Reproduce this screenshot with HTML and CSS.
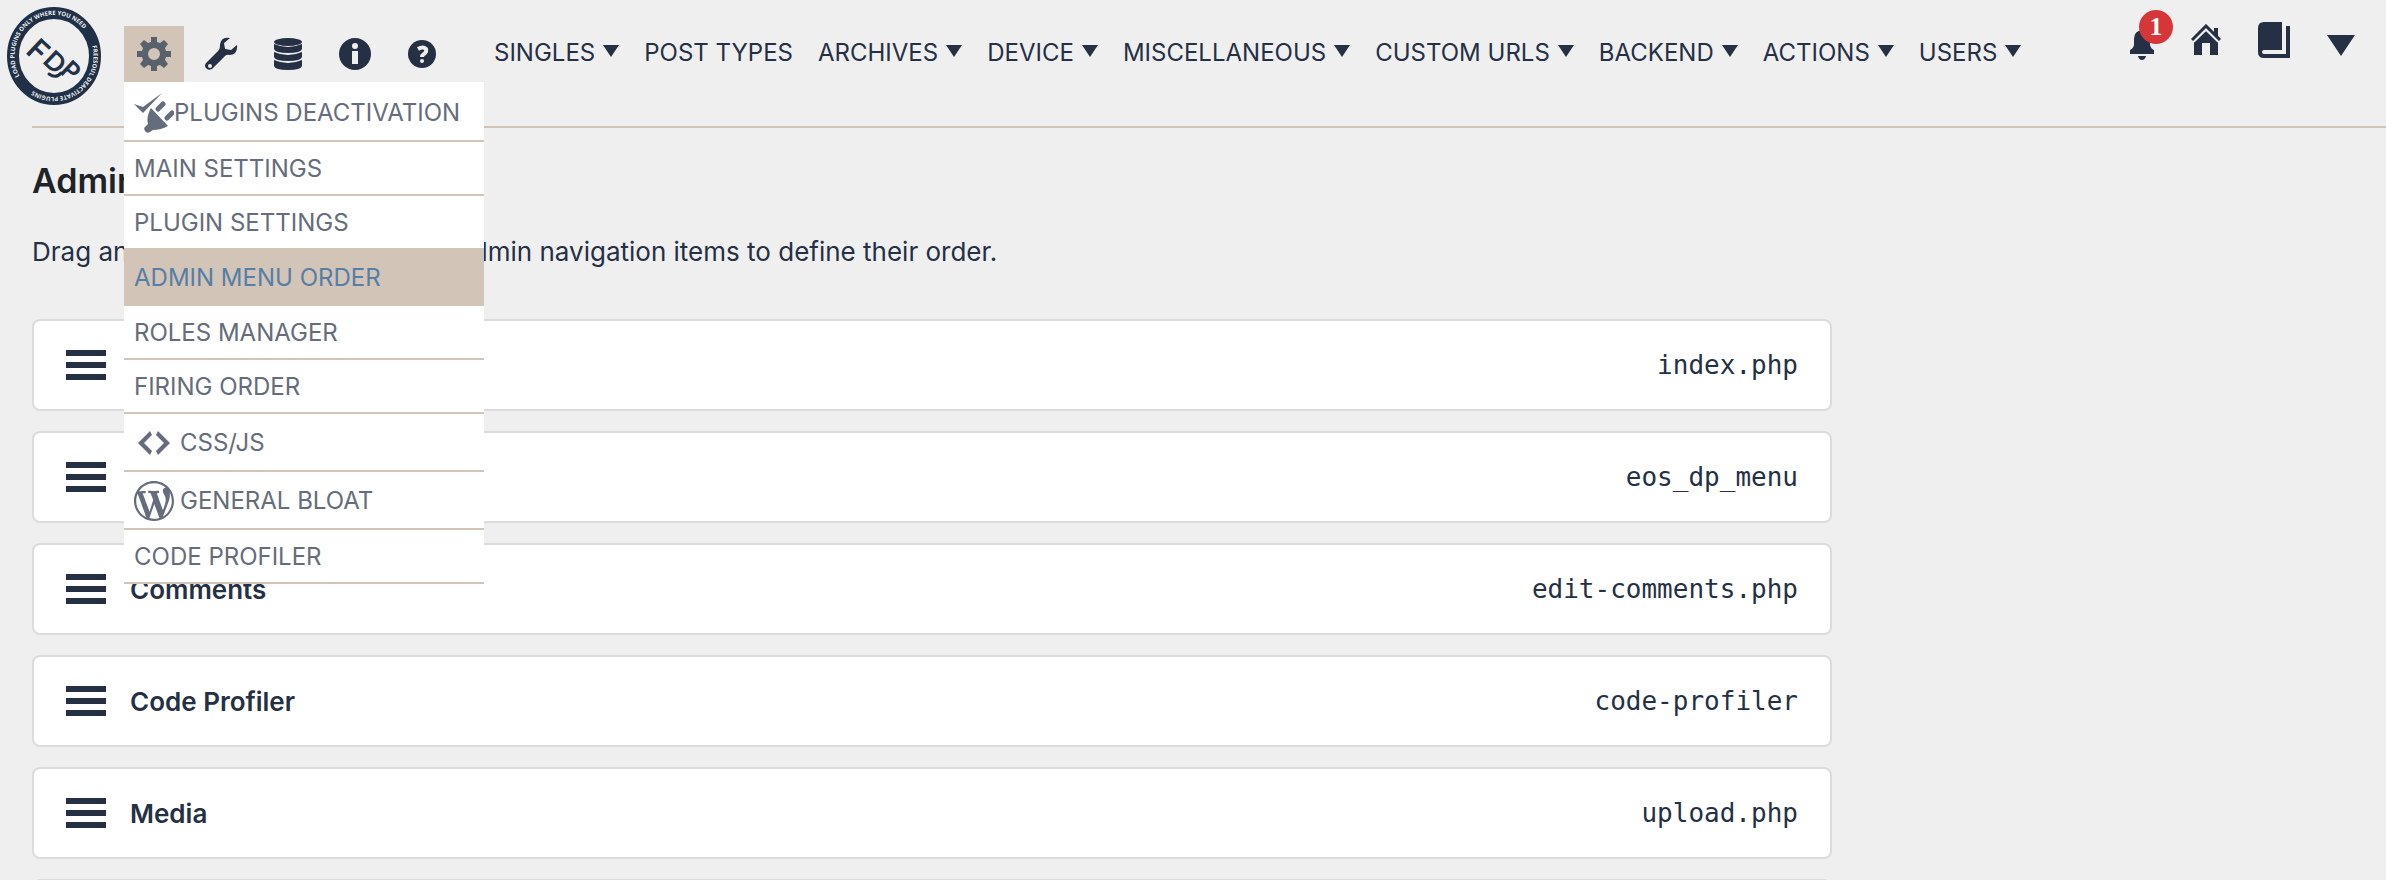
FILE: index.html
```
<!DOCTYPE html>
<html lang="en">
<head>
  <meta charset="UTF-8">
  <meta name="viewport" content="width=device-width, initial-scale=1.0">
  <title>Admin Menu Order</title>
  <link rel="stylesheet" href="styles.css">
</head>
<body>

  <!-- Header -->
  <header class="fdp-header">
    <a href="#" class="logo" aria-label="Freesoul Deactivate Plugins">
      <svg width="96" height="100" viewBox="0 0 96 100">
        <defs>
          <path id="ring" d="M15.6 73.5 A39.5 41 0 0 1 80.4 26.5 A39.5 41 0 0 1 15.6 73.5" />
        </defs>
        <ellipse cx="48" cy="50" rx="41" ry="43" fill="none" stroke="#1f3047" stroke-width="12" />
        <text class="ring-text"><textPath href="#ring" startOffset="4">LOAD PLUGINS ONLY WHERE YOU NEED</textPath></text>
        <text class="ring-text"><textPath href="#ring" startOffset="141">FREESOUL DEACTIVATE PLUGINS</textPath></text>
        <g class="monogram">
          <text transform="translate(19 46) rotate(43)" class="tall">F</text>
          <text transform="translate(36 56) rotate(43)">D</text>
          <text transform="translate(53 66) rotate(43)">P</text>
          <path d="M43 68 Q50 73 55 67" fill="none" stroke="#1f3047" stroke-width="3" stroke-linecap="round" />
        </g>
      </svg>
    </a>

    <nav class="icon-nav">
      <div class="icon-item active">
        <a href="#" aria-label="Settings">
          <svg width="34" height="34" viewBox="0 0 34 34">
            <path fill-rule="evenodd" d="M14 0h6v5l3 1 4-3 4 4-3 4 1 3h5v6h-5l-1 3 3 4-4 4-4-3-3 1v5h-6v-5l-3-1-4 3-4-4 3-4-1-3H0v-6h5l1-3-3-4 4-4 4 3 3-1zM17 11a6 6 0 1 0 0 12a6 6 0 0 0 0-12z" />
          </svg>
        </a>
        <ul class="dropdown">
          <li>
            <a href="#">
              <svg width="40" height="40" viewBox="0 0 40 40">
                <path d="M0 11l9 3L28 0 9 20z" />
                <path d="M17 15l17 18q-7 4-15 4l-3 2q-3 2-5-1t1-5l2-2q-2-7 3-16z" />
                <path d="M24 16l5-5M33 25l5-5" fill="none" stroke="#656c7b" stroke-width="5" stroke-linecap="round" />
              </svg>PLUGINS DEACTIVATION
            </a>
          </li>
          <li><a href="#">MAIN SETTINGS</a></li>
          <li><a href="#">PLUGIN SETTINGS</a></li>
          <li><a href="#" class="current">ADMIN MENU ORDER</a></li>
          <li><a href="#">ROLES MANAGER</a></li>
          <li><a href="#">FIRING ORDER</a></li>
          <li>
            <a href="#" class="with-icon">
              <svg width="40" height="40" viewBox="0 0 20 20">
                <path d="M9 6l-4 4 4 4-1 2-6-6 6-6zM11 14l4-4-4-4 1-2 6 6-6 6z" />
              </svg>CSS/JS
            </a>
          </li>
          <li>
            <a href="#" class="with-icon">
              <svg width="40" height="40" viewBox="0 0 20 20">
                <path d="M20 10c0-5.51-4.49-10-10-10C4.48 0 0 4.49 0 10c0 5.52 4.48 10 10 10 5.51 0 10-4.48 10-10zM7.78 15.37L4.37 6.22c.55-.02 1.17-.08 1.17-.08.5-.06.44-1.13-.06-1.11 0 0-1.45.11-2.37.11-.18 0-.37 0-.58-.01C4.12 2.69 6.87 1.11 10 1.11c2.33 0 4.45.87 6.05 2.34-.68-.11-1.65.39-1.65 1.58 0 .74.45 1.36.9 2.1.35.61.55 1.36.55 2.46 0 1.49-1.4 5-1.4 5l-3.03-8.37c.54-.02.82-.17.82-.17.5-.05.44-1.25-.06-1.22 0 0-1.44.12-2.38.12-.87 0-2.33-.12-2.33-.12-.5-.03-.56 1.2-.06 1.22l.92.08 1.26 3.41zM17.41 10c.24-.64.74-1.87.43-4.25.7 1.29 1.05 2.71 1.05 4.25 0 3.29-1.73 6.24-4.4 7.78.97-2.59 1.94-5.2 2.92-7.78zM6.1 18.09C3.12 16.65 1.11 13.53 1.11 10c0-1.3.23-2.48.72-3.59C3.25 10.3 4.67 14.2 6.1 18.09zm4.03-6.63l2.58 6.98c-.86.29-1.76.45-2.71.45-.79 0-1.57-.11-2.29-.33.81-2.38 1.62-4.74 2.42-7.1z" />
              </svg>GENERAL BLOAT
            </a>
          </li>
          <li><a href="#">CODE PROFILER</a></li>
        </ul>
      </div>
      <div class="icon-item">
        <a href="#" aria-label="Tools">
          <svg width="34" height="34" viewBox="0 0 34 34">
            <path fill-rule="evenodd" d="M26 1q-9-2-10 7 0 3-1 5L2 26q-2 3 0 5 2 3 6 1l13-13q2-2 5-1 8-1 7-10l-6 5-6-1-1-6zM6 27a2 2 0 1 1 0 4a2 2 0 0 1 0-4z" />
          </svg>
        </a>
      </div>
      <div class="icon-item">
        <a href="#" aria-label="Database">
          <svg width="30" height="34" viewBox="0 0 30 34">
            <ellipse cx="15" cy="5" rx="14" ry="4" />
            <path d="M1 7q14 6 28 0v5q-1 4-14 4T1 12zM1 15q14 6 28 0v5q-1 4-14 4T1 20zM1 23q14 6 28 0v6q-1 4-14 4T1 29z" />
          </svg>
        </a>
      </div>
      <div class="icon-item">
        <a href="#" aria-label="Information">
          <svg width="34" height="34" viewBox="0 0 34 34">
            <circle cx="17" cy="17" r="16" />
            <circle cx="17" cy="9" r="3" fill="#efefef" />
            <path d="M14 14h6v13h-6z" fill="#efefef" />
          </svg>
        </a>
      </div>
      <div class="icon-item">
        <a href="#" aria-label="Help">
          <svg width="34" height="34" viewBox="0 0 34 34">
            <circle cx="17" cy="17" r="14" />
            <path d="M13 12q5-3 8 0 1 3-2 5-2 1-2 3" fill="none" stroke="#efefef" stroke-width="4" />
            <circle cx="17" cy="24" r="2" fill="#efefef" />
          </svg>
        </a>
      </div>
    </nav>

    <nav class="main-nav">
      <a href="#" class="has-sub">SINGLES</a>
      <a href="#">POST TYPES</a>
      <a href="#" class="has-sub">ARCHIVES</a>
      <a href="#" class="has-sub">DEVICE</a>
      <a href="#" class="has-sub">MISCELLANEOUS</a>
      <a href="#" class="has-sub">CUSTOM URLS</a>
      <a href="#" class="has-sub">BACKEND</a>
      <a href="#" class="has-sub">ACTIONS</a>
      <a href="#" class="has-sub">USERS</a>
    </nav>

    <div class="right-nav">
      <a href="#" class="bell" aria-label="Notifications">
        <svg width="26" height="30" viewBox="0 0 26 30">
          <path d="M13 0q8 1 8 9v6q1 4 4 5v4H1v-4q3-1 4-5V9q0-8 8-9zM9 26h8q-1 4-4 4t-4-4z" />
        </svg>
        <span class="badge">1</span>
      </a>
      <a href="#" aria-label="Home">
        <svg width="30" height="32" viewBox="0 0 30 32">
          <path d="M3 31V18L15 7l12 11v13h-8V19h-8v12z" />
          <path d="M1 16L15 2l14 14" fill="none" stroke="#efefef" stroke-width="7" />
          <path d="M1 16L15 2l14 14" fill="none" stroke="#253044" stroke-width="3" />
          <path d="M23 4h4v9l-4-4z" />
        </svg>
      </a>
      <a href="#" aria-label="Documentation">
        <svg width="34" height="36" viewBox="0 0 34 36">
          <path d="M7 0h18v28H7q-2 0-2 2t2 2h22V4h4v32H7q-6 0-6-6V6q0-6 6-6z" />
        </svg>
      </a>
      <a href="#" class="more" aria-label="More">
        <svg width="28" height="22" viewBox="0 0 28 22"><path d="M0 1h28L14 22z" /></svg>
      </a>
    </div>
  </header>

  <!-- Admin menu order -->
  <main>
    <h1>Admin Menu Order</h1>
    <p>Drag and drop to reorder the main admin navigation items to define their order.</p>

    <ul class="menu-list">
      <li class="menu-card"><span class="handle"></span><strong>Dashboard</strong><code>index.php</code></li>
      <li class="menu-card"><span class="handle"></span><strong>Freesoul</strong><code>eos_dp_menu</code></li>
      <li class="menu-card"><span class="handle"></span><strong>Comments</strong><code>edit-comments.php</code></li>
      <li class="menu-card"><span class="handle"></span><strong>Code Profiler</strong><code>code-profiler</code></li>
      <li class="menu-card"><span class="handle"></span><strong>Media</strong><code>upload.php</code></li>
      <li class="menu-card"></li>
    </ul>
  </main>

</body>
</html>
```
FILE: styles.css
```
* {
  box-sizing: border-box;
}

body {
  margin: 0;
  height: 100vh;
  overflow: hidden;
  font-family: Inter, "Liberation Sans", sans-serif;
  font-size: 26px;
  color: #253044;
  background: #efefef;
}

a {
  color: inherit;
  text-decoration: none;
}

svg {
  display: block;
  flex: none;
  fill: currentColor;
}

ul {
  list-style: none;
  margin: 0;
  padding: 0;
}

.fdp-header {
  display: flex;
  align-items: flex-start;
  height: 126px;
  padding: 0 31px 0 6px;
}

.logo {
  padding-top: 6px;
  margin-right: 22px;
}

.ring-text {
  font-family: "Open Sans", sans-serif;
  font-size: 6px;
  font-weight: 700;
  fill: #efefef;
}

.monogram text {
  font-family: Lato, sans-serif;
  font-size: 25px;
  fill: #1f3047;
  stroke: #1f3047;
}

.monogram .tall {
  font-size: 29px;
}

/* Icon navigation */
.icon-nav {
  display: flex;
  gap: 7px;
  padding-top: 26px;
}

.icon-item {
  position: relative;
}

.icon-item > a {
  display: flex;
  align-items: center;
  justify-content: center;
  width: 60px;
  height: 56px;
}

.icon-item.active > a {
  color: #59616d;
  background: #d3c4b8;
}

.dropdown {
  position: absolute;
  top: 56px;
  left: 0;
  z-index: 10;
  width: 360px;
  padding-top: 2px;
  background: #fff;
  color: #656c7b;
  font-size: 24px;
}

.dropdown a {
  display: flex;
  align-items: center;
  min-height: 54px;
  padding: 9px 10px 7px;
  border-bottom: 2px solid #d3c4b8;
  line-height: 36px;
  white-space: nowrap;
}

.dropdown .with-icon {
  gap: 6px;
}

.dropdown .current {
  min-height: 56px;
  color: #557fa6;
  background: #d3c4b8;
}

/* Text navigation */
.main-nav {
  display: flex;
  gap: 25px;
  padding-top: 35px;
  margin-left: 42px;
  font-size: 24px;
  line-height: 36px;
  white-space: nowrap;
}

.has-sub::after {
  content: "";
  display: inline-block;
  margin-left: 8px;
  border: 8px solid transparent;
  border-top: 12px solid #253044;
  border-bottom: 0;
  vertical-align: 4px;
}

.right-nav {
  display: flex;
  align-items: center;
  gap: 36px;
  height: 80px;
  margin-left: auto;
}

.bell,
.more {
  position: relative;
  padding-top: 10px;
}

.badge {
  position: absolute;
  top: -10px;
  left: 10px;
  width: 34px;
  height: 34px;
  border-radius: 50%;
  background: #d63638;
  color: #fff;
  font: bold 26px/34px "Liberation Serif", serif;
  text-align: center;
}

/* Page content */
main {
  margin-left: 32px;
  border-top: 2px solid #d3c4b8;
}

h1 {
  margin: 32px 0 0;
  font-size: 34px;
  line-height: 42px;
  font-weight: 600;
  color: #1d2327;
}

p {
  margin: 31px 0 48px;
  line-height: 38px;
}

.menu-list {
  display: grid;
  gap: 20px;
  max-width: 1800px;
}

.menu-card {
  display: flex;
  align-items: center;
  height: 92px;
  padding: 0 32px;
  border: 2px solid #dcdcde;
  border-radius: 8px;
  background: #fff;
}

.handle {
  width: 40px;
  height: 30px;
  margin-right: 24px;
  border-top: 6px solid #253044;
  border-bottom: 6px solid #253044;
  background: linear-gradient(#253044, #253044) center / 100% 6px no-repeat;
}

.menu-card strong {
  font-weight: 600;
}

.menu-card code {
  margin-left: auto;
  font-family: "DejaVu Sans Mono", monospace;
  font-size: 26px;
}
```
